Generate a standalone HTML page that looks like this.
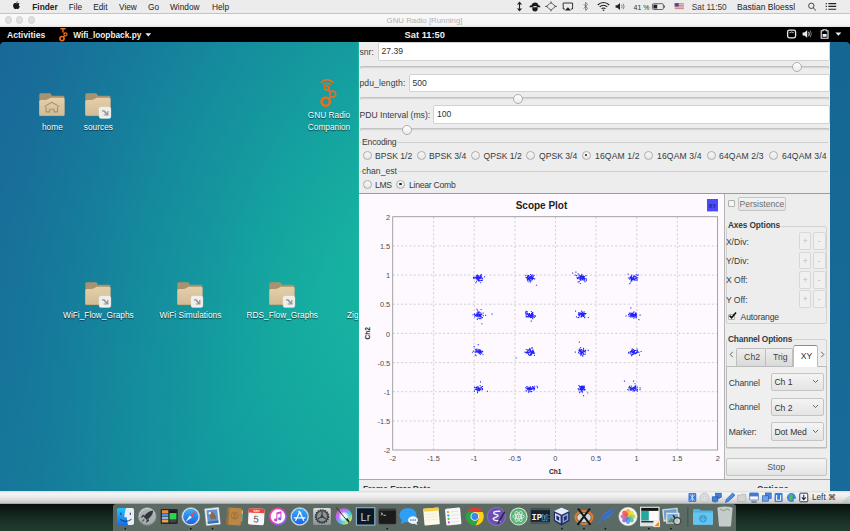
<!DOCTYPE html>
<html><head><meta charset="utf-8"><title>GNU Radio [Running]</title>
<style>
*{box-sizing:border-box;margin:0;padding:0}
html,body{width:850px;height:531px;overflow:hidden;background:#1a3a34;font-family:"Liberation Sans",sans-serif;font-size:8.5px;color:#2e3436}
.a{position:absolute}
.t{position:absolute;white-space:nowrap;line-height:1}
#macbar{left:0;top:0;width:850px;height:13px;background:#ececec}
#macbar .t{font-size:8.3px;top:2.5px;color:#222}
#title{left:0;top:13px;width:850px;height:14px;background:linear-gradient(#f9f9f9 0,#f5f5f5 80%,#e4e4e4 100%);border-top:1px solid #c4c4c4}
#gbar{left:0;top:27px;width:850px;height:15px;background:#000}
#gbar .t{color:#eee;font-weight:bold;font-size:8.4px;top:4.1px}
#desk{left:0;top:42px;width:850px;height:449px;overflow:hidden;
 background:linear-gradient(125deg,rgba(28,92,150,.4) 0,rgba(28,92,150,0) 42%),linear-gradient(35deg,rgba(18,150,156,.25) 0,rgba(18,150,156,0) 40%),radial-gradient(ellipse 480px 740px at 405px 255px,#18b8a2 0,#14a8a0 30%,#13939f 55%,#16789b 80%,#196998 100%)}
#rstrip{left:830px;top:42px;width:20px;height:449.2px;background:linear-gradient(#156693,#186b98)}
.dl{position:absolute;color:#fff;font-size:8.3px;text-align:center;line-height:11px;text-shadow:0 1px 1px rgba(0,0,0,.7);white-space:nowrap}
#app{left:358px;top:42px;width:472px;height:449px;background:#ededed;overflow:hidden}
.inp{position:absolute;background:#fff;border:1px solid #d2d2d2;border-radius:2px;height:18.6px;font-size:8.6px;line-height:16px;padding-left:3px;color:#2e3436}
.trk{position:absolute;height:3px;background:#d6d6d6;border:1px solid #c2c2c2;border-radius:2px;border-bottom-color:#e8e8e8}
.knob{position:absolute;width:10px;height:10px;border-radius:50%;background:linear-gradient(#fff,#ececec);border:1px solid #aeaeae}
.rad{position:absolute;width:9px;height:9px;border-radius:50%;border:1px solid #adadad;background:linear-gradient(#f8f8f8,#e6e6e6);margin:-1px 0 0 -.5px}
.rad.on:after{content:"";position:absolute;left:2.3px;top:2.3px;width:2.4px;height:2.4px;border-radius:50%;background:#222}
.lbl{position:absolute;white-space:nowrap;line-height:1;font-size:8.6px;color:#353b3e}
.fr{position:absolute;height:1px;background:#cfcfcf}
.btn{position:absolute;border:1px solid #c4c4c4;border-radius:2px;background:linear-gradient(#f4f4f4,#e4e4e4);text-align:center;color:#6a6e70}
.btn.pm{font-size:8.5px;color:#bcbcbc;border-color:#d8d8d8;background:#f0f0f0}
#vbbar{left:0;top:491.2px;width:850px;height:12.4px;background:linear-gradient(#dcdcdc 0,#f4f4f4 18%,#ececec 45%,#cdcdcd 88%,#9a9a9a 100%)}
#macdesk{left:0;top:503.4px;width:850px;height:28px;background:linear-gradient(#070d0a 0,#101f18 30%,#1d3529 75%,#223c2f 100%)}
#dock{left:112.7px;top:504.2px;width:623.8px;height:27px;background:#5b6b63;border-radius:3px 3px 0 0}
</style></head><body>

<div class="a" id="macdesk"></div>
<div class="a" id="dock"></div>
<!--DOCK-->
<svg class="a" id="docksvg" style="left:0;top:504px" width="850" height="27" viewBox="0 504 850 27">

<linearGradient id="gsil" x1="0" y1="0" x2="0" y2="1"><stop offset="0" stop-color="#d9dcdc"/><stop offset="1" stop-color="#8d9392"/></linearGradient>
<linearGradient id="gblue" x1="0" y1="0" x2="0" y2="1"><stop offset="0" stop-color="#35b0f8"/><stop offset="1" stop-color="#1d62e8"/></linearGradient>
<linearGradient id="gfin" x1="0" y1="0" x2="0" y2="1"><stop offset="0" stop-color="#22c4fa"/><stop offset="1" stop-color="#1a6cee"/></linearGradient>
<linearGradient id="gitu" x1="0" y1="0" x2="1" y2="1"><stop offset="0" stop-color="#ff4f8b"/><stop offset=".5" stop-color="#d63fd0"/><stop offset="1" stop-color="#5a7cf5"/></linearGradient>
<linearGradient id="gcol" x1="0" y1="0" x2="1" y2="1"><stop offset="0" stop-color="#ff4fb0"/><stop offset=".35" stop-color="#b070ff"/><stop offset=".6" stop-color="#40d0e0"/><stop offset=".85" stop-color="#e8e840"/><stop offset="1" stop-color="#ff9a30"/></linearGradient>
<radialGradient id="gwhc"><stop offset="0" stop-color="#fff"/><stop offset=".45" stop-color="#fff" stop-opacity=".9"/><stop offset="1" stop-color="#fff" stop-opacity="0"/></radialGradient>

<g transform="translate(125.5 516.5)"><rect x="-8.5" y="-8.5" width="17" height="17" rx="2" fill="url(#gfin)"/><path d="M.6 -8.5H6.5Q8.5 -8.5 8.5 -6.5V6.5Q8.5 8.5 6.5 8.5H2.6C1.4 4 1.2 1.5 1.3 .8H-1.2C-1 -3 -.2 -6 .6 -8.5Z" fill="#e9eef5"/><path d="M-4.6 -3.8V-1.6M4.8 -3.8V-1.6" stroke="#1b2c4a" stroke-width="1"/><path d="M-5.6 2.8Q0 6.8 6 2.8" stroke="#1b2c4a" stroke-width=".9" fill="none"/></g>
<g transform="translate(147.2 516.5)"><circle r="9" fill="url(#gsil)" stroke="#7d8483" stroke-width=".7"/><circle r="7.4" fill="#a9b0b1"/><path d="M6 -6C2.4 -5.8 -1.4 -3.2 -3.4 .4L-.4 3.4C3.2 1.4 5.8 -2.4 6 -6ZM-4 .6L-6.6 1.4L-4.4 -1.8L-2.6 -1.6ZM-.6 4L-1.4 6.6L1.8 4.4L1.6 2.6ZM-3.4 2.6L-6 6L-2.6 3.6Z" fill="#30363a"/></g>
<g transform="translate(169.2 516.5)"><rect x="-8.5" y="-7.5" width="17" height="15" rx="1" fill="#23262b"/><rect x="-7.3" y="-6.3" width="6.4" height="2.8" fill="#f08a2c"/><rect x="-7.3" y="-3.2" width="6.4" height="3" fill="#4e8fe0"/><rect x="-7.3" y=".2" width="6.4" height="2.6" fill="#8fb4e8"/><rect x="-7.3" y="3.2" width="6.4" height="2.8" fill="#f0a040"/><rect x=".4" y="-5.6" width="6.8" height="2" fill="#1a1a1a"/><rect x=".4" y="-3.4" width="6.8" height="6.4" fill="#2fd64a"/><rect x=".4" y="3.4" width="6.8" height="2.4" fill="#444"/></g>
<g transform="translate(190.8 516.5)"><circle r="9" fill="#e4e6e8" stroke="#a9adb0" stroke-width=".6"/><circle r="7.7" fill="url(#gblue)"/><path d="M5.2 -5.2L1 1L-1 -1Z" fill="#f2453d"/><path d="M-5.2 5.2L-1 -1L1 1Z" fill="#f4f4f4"/></g>
<g transform="translate(212.5 516.5)"><g transform="rotate(-6)"><rect x="-7" y="-8.4" width="14" height="16.8" fill="#f3f3f0" stroke="#cfd2d6" stroke-width=".5"/><rect x="-5.4" y="-6.8" width="10.8" height="13.6" fill="#5e94d6"/><path d="M-3.4 -3.4C-1 -5 1.6 -4.4 2 -2.4C3.6 -1 4 1.8 2.4 3.6L.8 1.8L-1.6 3.2C-1.8 1 -3 -1 -3.4 -3.4Z" fill="#8a6a48"/><circle cx="-2.4" cy="-3.6" r="1.3" fill="#f1efe9"/><rect x="-5.4" y="4.6" width="10.8" height="2.2" fill="#3f68a8"/></g></g>
<g transform="translate(234.3 516.5)"><g transform="rotate(4)"><rect x="-7.4" y="-8.6" width="14.4" height="17.2" rx="1.2" fill="#b98748"/><rect x="-7.4" y="-8.6" width="2" height="17.2" fill="#9c6e36"/><rect x="7" y="-6.6" width="1.3" height="3.6" fill="#e8c23c"/><rect x="7" y="-2.8" width="1.3" height="3.6" fill="#5ab0e8"/><rect x="7" y="1" width="1.3" height="3.6" fill="#58c070"/><circle cx=".4" cy="-1" r="3.5" fill="none" stroke="#9c6e36" stroke-width=".8"/><circle cx=".4" cy="-2" r="1.2" fill="#9c6e36"/><path d="M-1.8 1.4Q.4 -1 2.6 1.4" fill="#9c6e36"/></g></g>
<g transform="translate(256.3 516.5)"><g transform="rotate(3)"><rect x="-8" y="-8" width="16" height="16.4" rx="1.8" fill="#f7f7f7"/><path d="M-8 -3.6V-6.2Q-8 -8 -6.2 -8H6.2Q8 -8 8 -6.2V-3.6Z" fill="#f0453c"/><text x="0" y="-4.4" font-family="Liberation Sans,sans-serif" font-size="3.2" fill="#fff" text-anchor="middle" font-weight="bold">SEP</text><text x="0" y="5.8" font-family="Liberation Sans,sans-serif" font-size="9.6" fill="#4a4a4a" text-anchor="middle">5</text></g></g>
<g transform="translate(278 516.5)"><circle r="9" fill="url(#gitu)"/><circle r="7.2" fill="#fbfbfd"/><path d="M-1.6 -4L3.4 -5.2V2.2A1.7 1.5 0 1 1 2.4 .9V-3L-.6 -2.3V3.4A1.7 1.5 0 1 1 -1.6 2.1Z" fill="url(#gitu)"/></g>
<g transform="translate(299.7 516.5)"><circle r="9" fill="#dfe7f0" stroke="#b9c4d0" stroke-width=".5"/><circle r="7.9" fill="url(#gblue)"/><path d="M-4 4L0 -4.6L4 4M-5.4 1.4H5.4M-1 -4.8L1.2 -3.4" stroke="#fff" stroke-width="1.2" fill="none" stroke-linecap="round"/></g>
<g transform="translate(322 516.5)"><rect x="-8.8" y="-8.5" width="17.6" height="17" rx="1.5" fill="url(#gsil)"/><circle r="6.6" fill="#4a4f52"/><circle r="5" fill="#8e9496"/><circle r="1.5" fill="#3c4043"/><path d="M0 0V-5M0 0L4.3 2.5M0 0L-4.3 2.5" stroke="#3c4043" stroke-width="1.3"/><circle r="6.6" fill="none" stroke="#33373a" stroke-width="1.4" stroke-dasharray="1.4 1"/></g>
<g transform="translate(343.9 516.5)"><circle r="8.3" fill="url(#gcol)"/><circle r="5.6" fill="url(#gwhc)"/><path d="M-7.5 -9L3 4" stroke="#222" stroke-width=".9"/><path d="M2 2.6L4.8 6.4L6 5.6L3.4 1.6Z" fill="#1a1a2a"/></g>
<g transform="translate(365.6 516.5)"><rect x="-9.2" y="-8.8" width="18.4" height="17.4" fill="#0c1826" stroke="#8cb4d4" stroke-width="1.1"/><text x="-.2" y="4.6" font-family="Liberation Sans,sans-serif" font-size="11" fill="#b9d8f0" text-anchor="middle">Lr</text></g>
<g transform="translate(387.4 516.5)"><rect x="-8.6" y="-7.6" width="17.2" height="15.2" rx="1.2" fill="#1b1b1b" stroke="#3c3c3c" stroke-width=".6"/><rect x="-8.6" y="-7.6" width="17.2" height="2" fill="#3a3a3a"/><path d="M-6.6 -3.8L-4.6 -2.6L-6.6 -1.4M-4 -1.2H-1.6" stroke="#e8e8e8" stroke-width=".8" fill="none"/></g>
<g transform="translate(408.6 516.5)"><ellipse cx="-.6" cy="-1.4" rx="8.6" ry="7.2" fill="#2d9ff7"/><path d="M-6.6 3L-8 7.4L-2.6 5.4Z" fill="#2d9ff7"/><ellipse cx="4.4" cy="3.6" rx="5" ry="3.8" fill="#f1f4f8"/><path d="M7.6 6L9 8.6L5.4 7.2Z" fill="#f1f4f8"/><circle cx="2.2" cy="3.6" r=".8" fill="#3a7fd0"/><circle cx="4.4" cy="3.6" r=".8" fill="#3a7fd0"/><circle cx="6.6" cy="3.6" r=".8" fill="#3a7fd0"/></g>
<g transform="translate(431.4 516.5)"><g transform="rotate(-5)"><rect x="-7.6" y="-8.4" width="15.4" height="16.8" rx=".8" fill="#fbf8e8"/><rect x="-7.6" y="-8.4" width="15.4" height="3" fill="#f6cf45"/><path d="M-6 -2.4H6M-6 .4H6M-6 3.2H6" stroke="#e6e1cd" stroke-width=".5"/></g></g>
<g transform="translate(453.2 516.5)"><g transform="rotate(-5)"><rect x="-7.6" y="-8.4" width="15.2" height="16.8" rx="1.4" fill="#f8f8f6"/><circle cx="-4.8" cy="-4.8" r="1.1" fill="#f39c33"/><circle cx="-4.8" cy="-1.4" r="1.1" fill="#3b8cf2"/><circle cx="-4.8" cy="2" r="1.1" fill="#3fc93f"/><circle cx="-4.8" cy="5.4" r="1.1" fill="#d63fe0"/><path d="M-2.4 -4.8H5.6M-2.4 -1.4H5.6M-2.4 2H5.6M-2.4 5.4H5.6" stroke="#d9d9d5" stroke-width=".6"/></g></g>
<g transform="translate(474.8 516.5)"><circle r="9" fill="#e33b2e"/><path d="M-7.8 -4.5A9 9 0 0 0 .8 8.96L4 2.4L0 0Z" fill="#2ba24c"/><path d="M.8 8.96A9 9 0 0 0 7.8 -4.5H0L4 2.4Z" fill="#fbd116"/><path d="M-7.8 -4.5L-3.6 2L0 0V-4.5Z" fill="#2ba24c"/><circle r="4.3" fill="#f4f4f4"/><circle r="3.4" fill="#3f86e8"/></g>
<g transform="translate(496.4 516.5)"><circle r="9" fill="#6b4fb3"/><circle r="9" fill="none" stroke="#8f7ad0" stroke-width=".8"/><path d="M3.4 -5.2C-1 -5.6 -3.6 -4.4 -2.4 -3C-1 -1.6 2.4 -2 1.4 -.4C.4 1 -4 1 -3 2.8C-2 4.4 2 4 3.6 4.8" fill="none" stroke="#f3effa" stroke-width="1.4" stroke-linecap="round"/><path d="M7.8 -5.2L.6 6.8L2 7.4L8.8 -4Z" fill="#2a2540"/></g>
<g transform="translate(518.6 516.5)"><circle r="9" fill="#d8eadf"/><circle r="8" fill="#5db47a"/><g fill="none" stroke="#f0f8f2" stroke-width=".8"><ellipse rx="5.6" ry="2.2"/><ellipse rx="5.6" ry="2.2" transform="rotate(60)"/><ellipse rx="5.6" ry="2.2" transform="rotate(120)"/></g><circle r="1" fill="#f0f8f2"/></g>
<g transform="translate(540.4 516.5)"><rect x="-9.6" y="-8" width="19.2" height="14.8" fill="#18222c"/><rect x="-9.6" y="-8" width="19.2" height="1.6" fill="#4a545c"/><rect x="-9.6" y="5.2" width="19.2" height="1.6" fill="#4a545c"/><text x="-9" y="3" font-family="Liberation Mono,monospace" font-size="9.5" font-weight="bold" fill="#f2f2f2" textLength="10.5" lengthAdjust="spacingAndGlyphs">IP</text><text x="1.4" y="2.6" font-family="Liberation Mono,monospace" font-size="8" font-weight="bold" fill="#a4cbe8" textLength="8" lengthAdjust="spacingAndGlyphs">[y]:</text></g>
<g transform="translate(561.6 516.5)"><path d="M0 -9L7.8 -5.4V4.4L0 9L-7.8 4.4V-5.4Z" fill="#1d2f6a"/><path d="M0 -9L7.8 -5.4L0 -1.8L-7.8 -5.4Z" fill="#e6ebf4"/><path d="M-6.6 -3.4L-1 -0.8V6.8L-6.6 3.6Z" fill="#cdd6ea"/><path d="M6.6 -3.4L1 -0.8V6.8L6.6 3.6Z" fill="#8ea0cc"/><path d="M-5.2 -1L-2.4 .4V4.4L-5.2 2.8Z" fill="#1d2f6a"/><path d="M5.2 -1L2.4 .4V4.4L5.2 2.8Z" fill="#1d2f6a"/></g>
<g transform="translate(584 516.5)"><ellipse rx="8.6" ry="6.4" cy="1" fill="none" stroke="#e8762c" stroke-width="2"/><ellipse rx="6.8" ry="4.6" cy="1" fill="#e9e9e9" opacity=".85"/><path d="M-6 -8L6.4 8.4M-6.4 8.4L6 -8" stroke="#151515" stroke-width="2"/></g>
<g transform="translate(605.8 516.5)"><path d="M9.2 -7.6C4 -8 -2.6 -3.6 -5.2 2.4L-8.8 7.8L-7.8 8.4L-4.2 3.8C2.4 3 8 -2 9.2 -7.6Z" fill="#3f73c4"/><path d="M8 -6.6C3.6 -4 -1.6 .4 -5 4" stroke="#2a56a0" stroke-width=".6" fill="none"/></g>
<g transform="translate(628 516.5)"><circle r="9.2" fill="#f6f6f6" stroke="#cfd2d2" stroke-width=".5"/><ellipse rx="2.3" ry="3.5" cy="-3.9" fill="#f7a928" opacity=".88" transform="rotate(0)"/><ellipse rx="2.3" ry="3.5" cy="-3.9" fill="#f4d92a" opacity=".88" transform="rotate(45)"/><ellipse rx="2.3" ry="3.5" cy="-3.9" fill="#b2d235" opacity=".88" transform="rotate(90)"/><ellipse rx="2.3" ry="3.5" cy="-3.9" fill="#4cc2a4" opacity=".88" transform="rotate(135)"/><ellipse rx="2.3" ry="3.5" cy="-3.9" fill="#4a9fe0" opacity=".88" transform="rotate(180)"/><ellipse rx="2.3" ry="3.5" cy="-3.9" fill="#8070d0" opacity=".88" transform="rotate(225)"/><ellipse rx="2.3" ry="3.5" cy="-3.9" fill="#d160b8" opacity=".88" transform="rotate(270)"/><ellipse rx="2.3" ry="3.5" cy="-3.9" fill="#f0544a" opacity=".88" transform="rotate(315)"/></g>
<g transform="translate(649.8 516.5)"><rect x="-9.8" y="-9.8" width="19.6" height="19.6" fill="#dfe2e2"/><rect x="-8.6" y="-8.6" width="17.2" height="14.6" fill="#fafafa"/><rect x="-8.6" y="-8.6" width="17.2" height="3" fill="#161616"/><rect x="-8.6" y="-5.6" width="7.6" height="9.6" fill="#25a79c"/><rect x="-8.6" y="4.4" width="17.2" height="1.6" fill="#333"/><rect x="3.6" y="4.2" width="6.4" height="6.4" fill="#f4f1ea"/><path d="M4.4 9.8L9.2 5V9.8Z" fill="#f08a24"/></g>
<g transform="translate(672.2 516.5)"><g transform="rotate(-6)"><rect x="-9" y="-8" width="15" height="12" fill="#f2f2ee" stroke="#c9c9c4" stroke-width=".4"/><rect x="-8" y="-7" width="13" height="10" fill="#6f9fd0"/><path d="M-8 3L-3.4 -2L.4 1.4L2.6 -.6L5 3Z" fill="#c9b48a"/></g><rect x="-6" y="-3.6" width="13" height="10.5" fill="#f2f2ee" stroke="#c9c9c4" stroke-width=".4"/><rect x="-5" y="-2.6" width="11" height="8.5" fill="#7fb0dc"/><path d="M-5 5.9L-1 1.4L2.4 4.4L6 2V5.9Z" fill="#5d8f5a"/><circle cx="5" cy="4.6" r="3.6" fill="#cfd6da" fill-opacity=".8" stroke="#4a4a4a" stroke-width="1.3"/><path d="M1 -1.4L3 2" stroke="#333" stroke-width="1.6"/></g>
<path d="M687.8 507V527" stroke="#3f4a47" stroke-width=".8"/>
<g transform="translate(703 516.5)"><path d="M-10 -6.4Q-10 -7.6 -8.8 -7.6H-3.6L-2 -6H8.8Q10 -6 10 -4.8V7Q10 8.2 8.8 8.2H-8.8Q-10 8.2 -10 7Z" fill="#4fb2e6"/><path d="M-10 -4H10V7Q10 8.2 8.8 8.2H-8.8Q-10 8.2 -10 7Z" fill="#66c4f0"/><circle cy="2.2" r="3.8" fill="#3f9fd6"/><path d="M0 -.2V4M-1.8 2.4L0 4.4L1.8 2.4" stroke="#66c4f0" stroke-width="1" fill="none"/></g>
<g transform="translate(725 516.5)"><path d="M-7.6 -8.4H7.6L6 9.2Q5.9 10 5 10H-5Q-5.9 10 -6 9.2Z" fill="#dde3e3" fill-opacity=".82"/><ellipse cy="-8.4" rx="7.6" ry="1.5" fill="#c4cccc"/><path d="M-4.4 -5V8M-1.5 -5V8.4M1.5 -5V8.4M4.4 -5V8" stroke="#c2c9c9" stroke-width=".7"/><path d="M-5 -7.4L-1 -5.6L2 -7.6L5 -6" stroke="#8a9a7a" stroke-width="1" fill="none"/></g>
<circle cx="125.3" cy="528.6" r=".85" fill="#0c0c0c"/>
<circle cx="190.8" cy="528.6" r=".85" fill="#0c0c0c"/>
<circle cx="212.5" cy="528.6" r=".85" fill="#0c0c0c"/>
<circle cx="387.2" cy="528.6" r=".85" fill="#0c0c0c"/>
<circle cx="562" cy="528.6" r=".85" fill="#0c0c0c"/>
<circle cx="584" cy="528.6" r=".85" fill="#0c0c0c"/>
<circle cx="605.4" cy="528.6" r=".85" fill="#0c0c0c"/>
<circle cx="648.9" cy="528.6" r=".85" fill="#0c0c0c"/>
<circle cx="670.9" cy="528.6" r=".85" fill="#0c0c0c"/>
</svg>
<!--/DOCK-->

<div class="a" id="macbar">
 <svg class="a" style="left:12.8px;top:1.2px" width="7" height="8.8" viewBox="0 0 8 10"><path d="M5.4 .2C5.4 1.2 4.7 2 3.8 2.1C3.7 1.2 4.5 .3 5.4 .2ZM4 2.6C4.5 2.6 5 2.2 5.7 2.2C6.5 2.2 7.1 2.6 7.5 3.2C6.2 4 6.4 5.9 7.8 6.4C7.5 7.3 6.6 9.2 5.6 9.2C5 9.2 4.7 8.8 4 8.8C3.3 8.8 3 9.2 2.4 9.2C1.3 9.2 .1 7 .1 5.2C.1 3.400 1.200 2.400 2.300 2.400C3 2.400 3.500 2.600 4 2.600Z" fill="#1a1a1a"/></svg>
 <div class="t" style="left:32.3px;font-weight:bold">Finder</div>
 <div class="t" style="left:68.8px">File</div>
 <div class="t" style="left:93.2px">Edit</div>
 <div class="t" style="left:119px">View</div>
 <div class="t" style="left:148px">Go</div>
 <div class="t" style="left:170px">Window</div>
 <div class="t" style="left:212px">Help</div>
 <svg class="a" style="left:510px;top:0" width="340" height="13" viewBox="510 0 340 13" fill="none" stroke="#222" stroke-width="1">
  <path d="M519.5 3V10M517.6 4.600L519.5 2.400L521.4 4.600M517.6 8.400L519.5 10.600L521.400 8.400" stroke-width="1.1"/>
  <path d="M529.500 7.200C529.500 5.600 531 5.200 531.600 5.400C531.800 3.600 533.600 2.600 535.200 2.600C537 2.600 538.200 3.700 538.400 5.200C539.600 5.200 540.500 6 540.500 7.200ZM532.300 8.800A2.700 2.700 0 1 0 537.700 8.800A2.700 2.700 0 1 0 532.300 8.800Z" fill="#1a1a1a" stroke="none" fill-rule="evenodd"/>
  <path d="M533.700 9.200L534.700 9.900L536.500 7.800" stroke="#1a1a1a" stroke-width=".9"/>
  <path d="M546.400 6.400L551 2.600L555.600 6.400L551 10.200ZM551 1.400V3.600M551 9.200V11.400M545 6.400H547.500M554.500 6.400H557" stroke-width=".8" stroke="#444"/>
  <path d="M565 9H563.200V3H572.600V9H570.800" stroke-width=".9"/><path d="M564.800 10.600L567.900 7.200L571 10.600Z" fill="#222" stroke="none"/>
  <path d="M583.700 4.200L587.600 8.400L585.700 10.400V2.400L587.600 4.400L583.700 8.600" stroke-width=".7" stroke="#555"/>
  <path d="M597.800 5A7.800 7.800 0 0 1 609.200 5M599.700 7A5 5 0 0 1 607.300 7M601.600 8.900A2.500 2.500 0 0 1 605.400 8.900" stroke-width="1.150"/><circle cx="603.500" cy="10.300" r=".8" fill="#222" stroke="none"/>
  <path d="M615.600 5.200H617.400L620 3V10L617.400 7.800H615.600Z" fill="#222" stroke="none"/><path d="M621.600 4.800Q622.800 6.500 621.600 8.200M623.200 3.800Q625 6.500 623.200 9.200" stroke-width=".7" stroke="#555"/>
  <rect x="652.400" y="3.700" width="11" height="5.800" rx="1.200" stroke="#444" stroke-width=".8"/><rect x="653.400" y="4.700" width="3.800" height="3.800" fill="#222" stroke="none"/><path d="M664.400 5.600V7.600" stroke="#444" stroke-width="1"/>
  <rect x="674.700" y="3.200" width="9.200" height="6" fill="#e8d5d8" stroke="none"/><path d="M674.700 3.700H683.900M674.700 5.300H683.900M674.700 6.900H683.900M674.700 8.600H683.900" stroke="#c9616b" stroke-width=".7"/><rect x="674.700" y="3.200" width="4" height="3.300" fill="#4a4a8c" stroke="none"/>
  <circle cx="811.300" cy="5.800" r="2.700" stroke="#333" stroke-width=".9"/><path d="M813.200 7.800L815.800 10.400" stroke="#333" stroke-width="1"/>
  <path d="M828.400 3.600H836.200M828.400 6.400H836.200M828.400 9.200H836.200" stroke="#222" stroke-width="1.100"/><path d="M825.700 3.600H826.900M825.700 6.400H826.900M825.700 9.200H826.900" stroke="#222" stroke-width="1.100"/>
 </svg>
 <div class="t" style="left:633.6px;font-size:7px;top:3.9px;color:#333">41 %</div>
 <div class="t" style="left:691.8px;color:#3a3a3a">Sat 11:50</div>
 <div class="t" style="left:737.1px;font-size:8.5px;top:2.9px">Bastian Bloessl</div>
</div>
<div class="a" id="title">
 <div class="t" style="left:386.6px;top:2.8px;font-size:7.85px;color:#b2b2b2">GNU Radio [Running]</div>
 <div class="a" style="left:4.6px;top:2.4px;width:7.2px;height:7.2px;border-radius:50%;background:#dedede;border:.6px solid #d2d2d2"></div>
 <div class="a" style="left:16.3px;top:2.4px;width:7.2px;height:7.2px;border-radius:50%;background:#dedede;border:.6px solid #d2d2d2"></div>
 <div class="a" style="left:28.0px;top:2.4px;width:7.2px;height:7.2px;border-radius:50%;background:#dedede;border:.6px solid #d2d2d2"></div>
</div>
<div class="a" id="gbar">
 <div class="t" style="left:7px;font-size:8.600px">Activities</div>
 <svg class="a" style="left:58px;top:0" width="12" height="15" viewBox="58 27 12 15" fill="none" stroke="#f26b1d"><path d="M60.400 28.700H65.600" stroke-width="1.500"/><path d="M63 29V32.400" stroke-width="1.400"/><circle cx="65.500" cy="34.400" r="1.500" stroke-width="1.200"/><circle cx="62" cy="38.600" r="2.100" stroke-width="1.600"/><path d="M63.600 32.800L64.500 33.400M64.600 35.800L63.400 36.900" stroke-width="1.200"/></svg>
 <div class="t" style="left:73.200px;font-size:8.300px">Wifi_loopback.py</div>
 <svg class="a" style="left:144.500px;top:5.500px" width="7" height="4" viewBox="0 0 7 4"><path d="M.4 .3H6.200L3.300 3.600Z" fill="#eee"/></svg>
 <div class="t" style="left:404.6px;font-size:9.3px;top:3.9px">Sat 11:50</div>
 <svg class="a" style="left:780px;top:0" width="70" height="15" viewBox="780 27 70 15">
  <rect x="787.600" y="30.200" width="8" height="7.600" rx="1.800" fill="none" stroke="#eee" stroke-width="1.300"/><path d="M789.400 32.800Q791.600 31.200 793.800 32.800" stroke="#eee" stroke-width=".8" fill="none"/>
  <path d="M802.600 32.600H804.400L807.200 30.200V37.800L804.400 35.400H802.600Z" fill="#eee"/><path d="M808.600 31.800Q810 34 808.600 36.200" stroke="#eee" stroke-width="1" fill="none"/><path d="M810.200 30.600Q812.400 34 810.200 37.400" stroke="#888" stroke-width=".9" fill="none"/>
  <path d="M823 29.800H826.200V30.800H828V38.200H821.200V30.800H823Z" fill="none" stroke="#eee" stroke-width="1.100"/><rect x="822.600" y="34" width="4" height="2.800" fill="#eee"/>
  <path d="M835.400 32.400H841.400L838.400 35.800Z" fill="#eee"/>
 </svg>
</div>

<div class="a" id="desk">
 <svg width="0" height="0" style="position:absolute">
  <linearGradient id="fg" x1="0" y1="0" x2="0" y2="1"><stop offset="0" stop-color="#e2cfab"/><stop offset="1" stop-color="#d3bc94"/></linearGradient>
  </svg>
 <svg class="a" style="left:39.1px;top:50.5px" width="27" height="26" viewBox="0 0 27 26"><path d="M.3 1.8Q.3 .3 1.8 .3H10.6Q11.8 .3 12.3 1.4L12.9 2.7H24Q25.5 2.7 25.5 4.2V21.5Q25.5 23 24 23H1.8Q.3 23 .3 21.5Z" fill="#a9926d"/><path d="M.3 8.4Q.3 6.9 1.8 6.9H6.5C9.5 6.9 10 4.7 13 4.7H24Q25.5 4.7 25.5 6.2V21.5Q25.5 23 24 23H1.8Q.3 23 .3 21.5Z" fill="url(#fg)"/><path d="M.8 22.6H25" stroke="#b8a37c" stroke-width=".7"/><path d="M5.3 13.6L12.8 9.2L20.3 13.6M7.1 14V18.9H10.6V16.3H15V18.9H18.5V14" fill="none" stroke="#a8916b" stroke-width="1.1" stroke-linejoin="round"/></svg>
 <svg class="a" style="left:85.0px;top:50.5px" width="27" height="26" viewBox="0 0 27 26"><path d="M.3 1.8Q.3 .3 1.8 .3H10.6Q11.8 .3 12.3 1.4L12.9 2.7H24Q25.5 2.7 25.5 4.2V21.5Q25.5 23 24 23H1.8Q.3 23 .3 21.5Z" fill="#a9926d"/><path d="M.3 8.4Q.3 6.9 1.8 6.9H6.5C9.5 6.9 10 4.7 13 4.7H24Q25.5 4.7 25.5 6.2V21.5Q25.5 23 24 23H1.8Q.3 23 .3 21.5Z" fill="url(#fg)"/><path d="M.8 22.6H25" stroke="#b8a37c" stroke-width=".7"/><rect x="14.3" y="14.3" width="11.4" height="11" rx="1.6" fill="#eeeeec" stroke="#fafafa" stroke-width=".6"/><path d="M17 17.2H19.4L22.2 20.2V18H23.4V22.6H18.8V21.4H21L18.4 18.6H17Z" fill="#959595"/></svg>
 <svg class="a" style="left:85.2px;top:240.0px" width="27" height="26" viewBox="0 0 27 26"><path d="M.3 1.8Q.3 .3 1.8 .3H10.6Q11.8 .3 12.3 1.4L12.9 2.7H24Q25.5 2.7 25.5 4.2V21.5Q25.5 23 24 23H1.8Q.3 23 .3 21.5Z" fill="#a9926d"/><path d="M.3 8.4Q.3 6.9 1.8 6.9H6.5C9.5 6.9 10 4.7 13 4.7H24Q25.5 4.7 25.5 6.2V21.5Q25.5 23 24 23H1.8Q.3 23 .3 21.5Z" fill="url(#fg)"/><path d="M.8 22.6H25" stroke="#b8a37c" stroke-width=".7"/><rect x="14.3" y="14.3" width="11.4" height="11" rx="1.6" fill="#eeeeec" stroke="#fafafa" stroke-width=".6"/><path d="M17 17.2H19.4L22.2 20.2V18H23.4V22.6H18.8V21.4H21L18.4 18.6H17Z" fill="#959595"/></svg>
 <svg class="a" style="left:177.3px;top:240.0px" width="27" height="26" viewBox="0 0 27 26"><path d="M.3 1.8Q.3 .3 1.8 .3H10.6Q11.8 .3 12.3 1.4L12.9 2.7H24Q25.5 2.7 25.5 4.2V21.5Q25.5 23 24 23H1.8Q.3 23 .3 21.5Z" fill="#a9926d"/><path d="M.3 8.4Q.3 6.9 1.8 6.9H6.5C9.5 6.9 10 4.7 13 4.7H24Q25.5 4.7 25.5 6.2V21.5Q25.5 23 24 23H1.8Q.3 23 .3 21.5Z" fill="url(#fg)"/><path d="M.8 22.6H25" stroke="#b8a37c" stroke-width=".7"/><rect x="14.3" y="14.3" width="11.4" height="11" rx="1.6" fill="#eeeeec" stroke="#fafafa" stroke-width=".6"/><path d="M17 17.2H19.4L22.2 20.2V18H23.4V22.6H18.8V21.4H21L18.4 18.6H17Z" fill="#959595"/></svg>
 <svg class="a" style="left:269.3px;top:240.0px" width="27" height="26" viewBox="0 0 27 26"><path d="M.3 1.8Q.3 .3 1.8 .3H10.6Q11.8 .3 12.3 1.4L12.9 2.7H24Q25.5 2.7 25.5 4.2V21.5Q25.5 23 24 23H1.8Q.3 23 .3 21.5Z" fill="#a9926d"/><path d="M.3 8.4Q.3 6.9 1.8 6.9H6.5C9.5 6.9 10 4.7 13 4.7H24Q25.5 4.7 25.5 6.2V21.5Q25.5 23 24 23H1.8Q.3 23 .3 21.5Z" fill="url(#fg)"/><path d="M.8 22.6H25" stroke="#b8a37c" stroke-width=".7"/><rect x="14.3" y="14.3" width="11.4" height="11" rx="1.6" fill="#eeeeec" stroke="#fafafa" stroke-width=".6"/><path d="M17 17.2H19.4L22.2 20.2V18H23.4V22.6H18.8V21.4H21L18.4 18.6H17Z" fill="#959595"/></svg>
 <svg class="a" style="left:318px;top:35px" width="20" height="32" viewBox="318 77 20 32"><g fill="none" stroke="#f26b1d" stroke-linecap="round">
  <path d="M321.3 82.6A7.4 7.4 0 0 1 333 82.6" stroke-width="1.5"/><path d="M323.6 84.6A4.6 4.6 0 0 1 330.4 84.6" stroke-width="1.4"/>
  <circle cx="326.6" cy="87.9" r="2.1" stroke-width="1.4"/>
  <circle cx="332.7" cy="94.1" r="3" stroke-width="1.6"/>
  <circle cx="325.7" cy="101.6" r="4.2" stroke-width="2.5"/>
  <path d="M328.2 89.6L330.4 91.8M330.6 96.8L328.6 98.6" stroke-width="1.8"/></g></svg>
 <div class="dl" style="left:7.4px;top:79.6px;width:90px">home</div>
 <div class="dl" style="left:53.4px;top:79.6px;width:90px">sources</div>
 <div class="dl" style="left:284.0px;top:67.8px;width:90px">GNU Radio</div>
 <div class="dl" style="left:284.0px;top:80.4px;width:90px">Companion</div>
 <div class="dl" style="left:53.4px;top:268.2px;width:90px">WiFi_Flow_Graphs</div>
 <div class="dl" style="left:145.4px;top:268.2px;width:90px">WiFi Simulations</div>
 <div class="dl" style="left:237.3px;top:268.2px;width:90px">RDS_Flow_Graphs</div>
 <div class="dl" style="left:347px;top:268.2px">Zig</div>
</div>

<div class="a" id="rstrip"></div>
<div class="a" style="left:0;top:41.8px;width:3px;height:3px;background:radial-gradient(circle at 100% 100%,rgba(0,0,0,0) 2.4px,#000 3px);z-index:6"></div>
<div class="a" style="left:847px;top:41.8px;width:3px;height:3px;background:radial-gradient(circle at 0 100%,rgba(0,0,0,0) 2.4px,#000 3px);z-index:6"></div>
<div class="a" style="left:358px;top:42px;width:1.1px;height:449.2px;background:linear-gradient(90deg,#19b5a1 0 60%,#3a5a58 60%);z-index:5"></div>
<div class="a" id="app">
 <!-- coordinates inside #app are screen minus (358,42) -->
 <div class="lbl" style="left:1.5px;top:5.5px">snr:</div>
 <div class="inp" style="left:19.5px;top:0;width:452px">27.39</div>
 <div class="trk" style="left:2px;top:23.5px;width:469px"></div>
 <div class="knob" style="left:433.5px;top:20px"></div>

 <div class="lbl" style="left:1.5px;top:37px;letter-spacing:0.09px">pdu_length:</div>
 <div class="inp" style="left:50.5px;top:31.5px;width:421px">500</div>
 <div class="trk" style="left:2px;top:55px;width:469px"></div>
 <div class="knob" style="left:154.5px;top:51.5px"></div>

 <div class="lbl" style="left:1.5px;top:68.5px">PDU Interval (ms):</div>
 <div class="inp" style="left:75px;top:63px;width:396.5px">100</div>
 <div class="trk" style="left:2px;top:86px;width:469px"></div>
 <div class="knob" style="left:43.5px;top:82.5px"></div>

 <div class="fr" style="left:2px;top:100px;width:468px"></div>
 <div class="lbl" style="left:3px;top:96px;background:#ededed;padding:0 1px;letter-spacing:-0.17px">Encoding</div>
 <div class="rad" style="left:5px;top:109.5px"></div><div class="lbl" style="left:17px;top:109.5px">BPSK 1/2</div>
 <div class="rad" style="left:59px;top:109.5px"></div><div class="lbl" style="left:71px;top:109.5px">BPSK 3/4</div>
 <div class="rad" style="left:113px;top:109.5px"></div><div class="lbl" style="left:125.5px;top:109.5px">QPSK 1/2</div>
 <div class="rad" style="left:168.5px;top:109.5px"></div><div class="lbl" style="left:181px;top:109.5px">QPSK 3/4</div>
 <div class="rad on" style="left:224px;top:109.5px"></div><div class="lbl" style="left:237px;top:109.5px;letter-spacing:0.13px">16QAM 1/2</div>
 <div class="rad" style="left:286.5px;top:109.5px"></div><div class="lbl" style="left:299px;top:109.5px;letter-spacing:0.13px">16QAM 3/4</div>
 <div class="rad" style="left:349px;top:109.5px"></div><div class="lbl" style="left:361px;top:109.5px;letter-spacing:0.13px">64QAM 2/3</div>
 <div class="rad" style="left:411.5px;top:109.5px"></div><div class="lbl" style="left:424px;top:109.5px;letter-spacing:0.13px">64QAM 3/4</div>

 <div class="fr" style="left:2px;top:129px;width:468px"></div>
 <div class="lbl" style="left:3px;top:124.5px;background:#ededed;padding:0 1px">chan_est</div>
 <div class="rad" style="left:5px;top:138.5px"></div><div class="lbl" style="left:17px;top:138.5px;letter-spacing:-0.4px">LMS</div>
 <div class="rad on" style="left:38.5px;top:138.5px"></div><div class="lbl" style="left:51px;top:138.5px;letter-spacing:-0.25px">Linear Comb</div>

 <!--PLOT-->
<svg class="a" id="plot" style="left:1.4px;top:152.0px" width="365.0" height="285.3" viewBox="0 0 365.0 285.3">
<rect width="365.0" height="285.3" fill="#fdf9ff"/>
<path d="M74.6 22.7V256.1M33.7 226.9H358.6M115.2 22.7V256.1M33.7 197.7H358.6M155.9 22.7V256.1M33.7 168.6H358.6M196.5 22.7V256.1M33.7 139.4H358.6M237.1 22.7V256.1M33.7 110.2H358.6M277.8 22.7V256.1M33.7 81.1H358.6M318.4 22.7V256.1M33.7 51.9H358.6" stroke="#c6c4c8" stroke-width="0.8" stroke-dasharray="2 2.2" fill="none"/>
<rect x="33.7" y="22.7" width="324.9" height="233.3" fill="none" stroke="#9a9a9a" stroke-width="0.9"/>
<path d="M121.5 195.6h1M118.9 195.2h1M118.8 194.8h1M118.6 195.0h1M121.0 195.6h1M119.8 194.2h1M119.8 196.7h1M121.7 194.2h1M115.0 197.1h1M123.0 195.6h1M119.0 195.6h1M120.6 195.6h1M119.8 194.0h1M116.9 193.8h1M117.6 196.1h1M119.9 195.0h1M120.1 196.8h1M117.8 195.3h1M117.5 194.0h1M118.2 197.2h1M118.9 193.8h1M117.2 194.0h1M121.6 193.2h1M118.0 198.6h1M120.8 195.8h1M119.4 194.0h1M118.8 194.8h1M117.7 192.8h1M115.7 193.6h1M118.1 196.8h1M117.2 193.8h1M115.7 195.5h1M121.4 194.3h1M119.0 194.4h1M118.5 192.9h1M122.9 194.7h1M118.9 196.2h1M119.1 194.6h1M118.2 195.0h1M119.8 195.1h1M119.4 194.1h1M119.3 196.2h1M119.9 194.4h1M117.0 195.4h1M122.0 193.1h1M120.4 194.0h1M117.7 195.5h1M123.0 192.5h1M120.0 195.5h1M119.5 195.8h1M116.7 195.0h1M119.3 194.9h1M117.7 195.5h1M114.9 193.4h1M118.5 193.3h1M117.1 193.4h1M128.0 197.3h1M121.0 187.9h1M120.6 191.5h1M117.7 195.8h1M121.7 157.7h1M121.6 159.0h1M121.6 158.9h1M114.1 157.1h1M118.7 157.5h1M119.9 159.1h1M115.7 155.3h1M117.3 156.9h1M121.2 158.9h1M121.8 157.6h1M118.8 158.5h1M119.3 155.6h1M116.0 158.1h1M117.8 157.7h1M121.3 157.5h1M117.5 155.1h1M119.4 156.7h1M118.7 157.4h1M120.8 156.5h1M121.0 157.1h1M119.8 159.5h1M116.2 157.8h1M116.4 156.3h1M119.4 157.0h1M119.5 159.2h1M119.8 157.0h1M115.7 157.9h1M123.2 157.7h1M117.9 158.0h1M117.7 157.1h1M120.6 155.8h1M115.8 160.8h1M120.2 158.1h1M117.3 158.1h1M112.9 158.3h1M119.2 157.8h1M121.0 157.2h1M116.7 155.8h1M120.9 158.7h1M119.0 157.0h1M121.1 156.9h1M118.7 157.4h1M122.6 157.1h1M115.8 158.3h1M120.4 158.2h1M119.8 157.8h1M117.2 157.0h1M117.6 156.3h1M117.2 157.0h1M120.5 157.5h1M118.9 157.7h1M120.4 155.8h1M122.2 159.2h1M123.5 160.8h1M120.8 160.4h1M120.8 158.0h1M115.6 157.8h1M116.5 161.6h1M120.2 156.8h1M118.7 150.7h1M114.6 152.6h1M120.1 121.7h1M115.0 120.7h1M119.8 118.5h1M119.5 120.0h1M121.2 122.9h1M119.9 121.4h1M118.2 119.0h1M115.7 121.3h1M119.8 120.6h1M119.5 121.5h1M121.2 122.1h1M123.7 121.6h1M121.0 121.6h1M122.2 120.6h1M119.8 122.3h1M115.5 120.8h1M117.7 120.9h1M115.0 120.4h1M123.6 119.2h1M120.4 120.2h1M117.2 121.6h1M117.9 121.9h1M118.3 119.3h1M119.7 122.5h1M121.9 123.1h1M122.1 120.0h1M118.2 122.0h1M120.9 122.5h1M119.3 120.2h1M120.3 120.3h1M118.6 119.9h1M117.5 115.4h1M117.5 122.0h1M118.7 121.6h1M118.0 122.2h1M116.1 121.7h1M117.4 122.4h1M117.8 125.4h1M122.9 123.6h1M119.9 124.6h1M120.8 121.7h1M120.4 120.3h1M119.5 117.6h1M121.2 118.8h1M121.3 120.4h1M116.8 120.5h1M117.4 121.0h1M118.6 124.1h1M121.1 124.5h1M119.3 121.3h1M120.7 121.7h1M118.1 120.2h1M119.2 121.9h1M126.1 121.4h1M115.2 122.9h1M118.9 120.6h1M118.1 116.9h1M120.9 120.7h1M121.4 124.8h1M117.5 119.4h1M119.9 122.8h1M118.5 119.7h1M121.6 115.5h1M119.7 121.0h1M113.5 120.8h1M117.7 120.8h1M116.4 121.8h1M117.5 118.8h1M115.1 119.9h1M121.1 120.7h1M119.6 122.2h1M122.4 129.8h1M119.0 118.5h1M132.5 120.1h1M119.7 120.3h1M119.8 84.6h1M121.7 80.9h1M118.5 82.7h1M119.4 85.5h1M118.1 84.3h1M117.7 84.5h1M125.0 82.8h1M117.7 83.6h1M121.2 83.6h1M119.2 84.1h1M117.5 85.4h1M117.8 84.0h1M119.1 84.0h1M119.2 84.8h1M118.8 84.3h1M121.2 84.2h1M119.6 86.4h1M115.7 83.4h1M117.4 81.6h1M120.9 82.7h1M116.4 88.7h1M121.4 86.4h1M118.9 83.6h1M121.7 80.7h1M116.8 81.9h1M119.8 83.1h1M116.7 83.7h1M121.3 81.1h1M120.7 81.8h1M121.9 82.3h1M118.8 82.7h1M120.5 84.2h1M118.6 84.6h1M120.8 82.0h1M117.2 82.1h1M118.2 82.1h1M123.2 84.1h1M119.3 81.8h1M116.2 83.4h1M122.6 85.2h1M119.3 84.7h1M119.0 86.9h1M120.3 86.9h1M121.9 83.7h1M117.5 85.4h1M117.8 81.1h1M117.0 82.2h1M120.4 84.5h1M119.2 87.0h1M118.4 86.2h1M120.1 84.0h1M118.9 86.7h1M118.1 81.4h1M118.6 86.1h1M116.9 84.4h1M122.7 86.6h1M121.2 88.8h1M119.7 83.9h1M115.4 84.8h1M121.7 83.6h1M119.1 85.2h1M120.7 83.6h1M118.3 83.5h1M113.9 83.3h1M122.1 86.5h1M114.7 83.8h1M118.9 82.7h1M121.3 82.7h1M119.7 84.0h1M114.0 84.2h1M118.5 86.4h1M117.0 87.3h1M171.5 194.3h1M174.2 193.9h1M172.4 194.2h1M169.2 195.7h1M174.0 194.8h1M169.2 195.9h1M170.7 195.2h1M174.4 196.3h1M169.6 197.8h1M170.8 195.8h1M169.3 194.8h1M166.7 197.1h1M174.1 193.2h1M167.3 192.7h1M173.6 194.2h1M170.7 194.4h1M170.5 193.4h1M170.9 192.9h1M170.7 195.2h1M171.9 194.5h1M168.7 195.0h1M169.7 196.9h1M172.6 194.7h1M169.7 193.9h1M168.6 194.4h1M171.5 195.5h1M172.2 197.5h1M169.2 194.8h1M177.5 192.4h1M169.6 195.0h1M171.2 195.3h1M170.3 195.3h1M171.0 195.8h1M166.3 193.7h1M170.8 193.5h1M168.3 195.6h1M169.3 195.6h1M172.6 195.2h1M172.0 194.7h1M167.5 194.8h1M171.9 194.1h1M170.6 195.8h1M168.7 195.6h1M175.2 194.1h1M171.2 194.6h1M174.5 195.2h1M173.0 193.9h1M170.8 194.8h1M166.6 196.7h1M173.0 192.5h1M172.6 194.6h1M171.9 195.3h1M167.3 194.5h1M174.4 194.1h1M168.4 193.0h1M167.9 195.3h1M174.8 195.4h1M171.4 197.7h1M169.6 193.9h1M172.1 195.5h1M168.4 193.3h1M171.5 195.1h1M167.7 194.6h1M169.5 195.4h1M170.5 194.7h1M169.0 198.2h1M178.1 193.6h1M175.2 192.3h1M171.2 197.3h1M172.3 158.2h1M173.5 156.2h1M172.4 158.4h1M168.7 158.6h1M167.0 158.0h1M170.4 156.2h1M170.6 158.0h1M169.6 161.0h1M173.5 158.7h1M172.1 160.6h1M171.8 159.6h1M170.3 161.4h1M173.5 159.4h1M166.8 155.5h1M165.4 158.2h1M173.9 158.6h1M171.6 157.6h1M174.1 158.2h1M167.5 159.2h1M171.9 159.6h1M170.3 156.4h1M171.6 158.3h1M171.6 158.8h1M169.1 156.1h1M168.7 158.1h1M170.1 154.6h1M173.5 157.7h1M171.6 158.3h1M173.1 158.7h1M173.2 156.4h1M171.0 156.1h1M171.1 156.4h1M171.2 157.1h1M170.4 156.7h1M168.2 157.3h1M169.0 160.4h1M167.4 158.2h1M170.9 160.2h1M168.8 158.8h1M166.5 158.5h1M172.3 158.3h1M173.9 158.7h1M169.4 159.0h1M171.5 157.7h1M170.7 155.2h1M172.7 157.2h1M170.2 155.6h1M172.9 153.9h1M175.1 159.1h1M173.9 159.5h1M166.7 158.5h1M172.2 154.1h1M171.3 157.0h1M170.5 157.8h1M172.7 157.2h1M170.3 156.9h1M171.3 161.2h1M166.6 158.6h1M168.4 156.7h1M169.7 158.5h1M167.8 159.2h1M167.7 158.1h1M172.2 159.4h1M171.6 158.2h1M168.2 155.8h1M156.6 164.0h1M174.1 157.4h1M174.9 161.4h1M172.9 119.2h1M174.2 122.9h1M170.0 122.8h1M168.1 122.7h1M171.4 122.0h1M170.9 121.8h1M173.2 119.7h1M169.7 122.3h1M173.7 120.9h1M171.3 123.6h1M166.6 117.3h1M173.0 121.9h1M172.8 118.5h1M171.4 120.8h1M170.5 121.7h1M173.2 124.6h1M166.0 119.3h1M167.5 123.0h1M169.0 121.3h1M171.8 117.5h1M173.4 122.2h1M169.6 120.3h1M169.9 121.6h1M171.4 122.0h1M168.0 119.7h1M170.9 121.2h1M169.1 122.9h1M171.7 122.1h1M172.1 123.4h1M170.0 120.8h1M172.8 121.8h1M167.5 120.3h1M172.0 121.4h1M170.0 119.6h1M170.4 122.2h1M172.8 120.6h1M168.8 120.4h1M166.7 122.4h1M173.1 120.9h1M172.1 123.2h1M170.9 121.1h1M172.9 120.1h1M171.9 119.6h1M172.8 119.9h1M171.0 121.2h1M167.6 120.3h1M171.7 120.6h1M169.2 120.0h1M169.5 120.9h1M170.2 122.7h1M171.9 120.7h1M166.5 121.1h1M172.4 120.8h1M174.9 123.4h1M173.6 120.7h1M176.0 122.1h1M166.8 123.0h1M167.5 119.1h1M173.1 123.1h1M171.3 122.4h1M173.4 118.7h1M171.5 121.9h1M168.5 122.0h1M169.9 121.5h1M170.9 123.3h1M171.4 120.7h1M167.1 120.0h1M175.3 121.6h1M173.2 122.3h1M167.6 120.3h1M170.0 122.4h1M168.6 120.2h1M167.7 117.7h1M169.8 121.3h1M166.3 118.1h1M171.7 127.1h1M171.7 82.5h1M172.8 84.6h1M168.1 86.1h1M167.4 83.9h1M172.0 84.2h1M172.6 83.3h1M170.6 83.4h1M170.9 80.6h1M168.5 81.7h1M171.7 84.1h1M168.1 82.4h1M171.8 84.5h1M172.3 83.1h1M172.4 81.4h1M169.4 81.7h1M171.6 86.9h1M169.5 83.2h1M169.4 85.9h1M172.9 83.0h1M170.7 88.1h1M167.7 84.2h1M169.5 83.2h1M169.7 84.7h1M168.1 85.3h1M170.5 85.4h1M167.9 85.9h1M170.5 86.7h1M175.2 84.9h1M173.3 83.6h1M167.3 83.7h1M172.2 83.3h1M166.4 83.3h1M170.7 82.5h1M169.2 85.1h1M172.1 85.1h1M172.3 84.5h1M166.4 81.4h1M170.0 85.8h1M168.6 87.8h1M174.5 81.4h1M173.8 82.4h1M170.8 82.9h1M170.0 86.1h1M168.9 84.7h1M173.4 84.5h1M170.3 83.7h1M173.7 84.7h1M169.9 85.8h1M168.5 83.6h1M170.4 84.8h1M167.9 86.2h1M171.0 84.2h1M172.0 81.6h1M170.0 84.2h1M172.9 85.8h1M170.3 86.8h1M171.6 83.9h1M172.9 81.0h1M168.3 82.8h1M168.6 82.9h1M167.8 84.1h1M172.6 84.0h1M174.1 84.4h1M176.9 91.3h1M222.9 195.7h1M220.5 193.6h1M220.1 192.4h1M222.9 196.1h1M222.0 195.3h1M224.6 192.9h1M222.1 194.6h1M223.8 192.5h1M219.3 195.4h1M221.0 195.2h1M223.2 195.6h1M223.7 195.2h1M222.2 192.2h1M223.8 192.6h1M221.9 196.9h1M219.3 196.0h1M220.8 194.6h1M219.3 191.5h1M222.9 198.2h1M223.6 194.9h1M222.4 197.6h1M225.0 193.9h1M220.5 197.9h1M221.6 195.9h1M224.3 193.5h1M221.2 192.5h1M224.2 194.6h1M223.6 192.6h1M223.4 193.4h1M221.8 192.7h1M221.7 195.9h1M221.7 194.3h1M223.0 194.3h1M223.0 194.9h1M223.7 194.2h1M222.4 195.1h1M224.8 195.5h1M220.3 192.9h1M222.1 194.2h1M220.7 194.0h1M223.5 192.0h1M222.7 194.4h1M224.8 192.1h1M223.0 194.5h1M222.4 195.6h1M225.6 195.5h1M223.1 192.6h1M223.3 192.7h1M222.0 195.6h1M224.6 196.4h1M222.6 196.2h1M221.8 195.0h1M222.1 196.2h1M221.8 193.3h1M220.2 198.7h1M218.7 194.7h1M221.8 194.5h1M220.5 195.7h1M222.4 193.3h1M221.6 192.8h1M222.9 198.1h1M228.3 199.0h1M222.3 195.0h1M224.1 201.6h1M222.5 194.8h1M224.9 157.4h1M224.6 157.3h1M221.1 157.4h1M224.1 154.4h1M222.3 158.8h1M225.5 156.8h1M215.8 158.1h1M221.3 157.6h1M221.7 158.5h1M226.2 156.4h1M222.1 156.2h1M220.9 156.6h1M221.5 159.4h1M220.9 157.6h1M225.1 157.6h1M223.2 157.5h1M219.5 156.5h1M221.7 157.6h1M220.0 156.9h1M223.7 156.5h1M220.4 157.4h1M219.1 158.4h1M222.1 159.0h1M220.7 159.8h1M221.4 156.0h1M221.8 160.5h1M223.5 155.9h1M221.2 153.6h1M221.7 155.7h1M221.3 158.8h1M223.7 157.5h1M228.7 156.4h1M223.7 159.8h1M222.6 158.7h1M223.2 158.9h1M221.7 159.1h1M225.7 160.1h1M221.3 161.1h1M221.9 157.9h1M223.5 156.5h1M223.2 162.3h1M222.0 158.2h1M222.0 160.4h1M223.7 157.9h1M224.1 155.9h1M219.6 156.6h1M223.9 155.9h1M219.7 155.2h1M220.4 156.2h1M222.4 158.8h1M223.8 159.0h1M222.0 160.3h1M223.4 157.1h1M219.5 159.3h1M224.4 160.4h1M221.8 157.9h1M223.8 156.3h1M219.9 155.1h1M223.6 157.0h1M226.1 158.0h1M224.0 156.8h1M222.2 160.6h1M219.8 148.2h1M223.5 161.3h1M221.6 119.1h1M219.3 118.7h1M219.8 120.7h1M223.7 120.6h1M221.2 119.5h1M222.3 120.2h1M224.4 120.8h1M224.0 121.4h1M221.9 121.1h1M220.0 121.8h1M221.5 119.6h1M222.0 122.1h1M221.9 117.2h1M220.5 120.8h1M222.9 119.5h1M222.5 121.8h1M222.9 118.1h1M220.4 119.6h1M220.6 120.5h1M224.3 120.6h1M219.3 118.7h1M223.3 119.3h1M221.4 122.9h1M225.4 123.1h1M219.3 123.4h1M221.9 122.5h1M222.1 122.6h1M222.2 121.1h1M221.8 119.7h1M222.2 122.3h1M219.7 121.2h1M219.9 119.2h1M218.6 123.7h1M222.7 120.5h1M224.6 117.9h1M222.5 120.1h1M223.8 119.0h1M222.5 121.0h1M225.5 120.3h1M222.2 121.7h1M223.3 121.9h1M222.5 119.5h1M225.1 123.8h1M222.5 120.0h1M224.7 119.6h1M222.9 118.7h1M225.5 119.3h1M223.0 120.1h1M221.1 119.2h1M222.0 119.3h1M224.4 119.6h1M222.0 122.1h1M224.0 122.4h1M224.7 121.6h1M223.9 122.4h1M219.2 121.0h1M222.4 120.8h1M223.6 119.5h1M218.9 120.1h1M223.4 119.7h1M216.9 122.9h1M228.8 123.5h1M221.3 120.3h1M216.1 117.2h1M226.4 119.5h1M222.2 83.1h1M222.8 85.6h1M222.9 84.5h1M220.9 82.8h1M222.7 82.0h1M223.9 83.3h1M221.1 85.0h1M224.1 84.4h1M220.4 85.5h1M218.6 88.0h1M223.8 82.9h1M223.0 85.8h1M223.4 84.7h1M221.9 83.2h1M223.2 83.9h1M224.7 84.0h1M219.8 83.4h1M219.9 83.3h1M222.8 84.3h1M223.4 82.3h1M222.3 83.4h1M219.1 84.0h1M221.2 84.6h1M220.4 81.8h1M222.9 83.5h1M225.6 84.5h1M221.1 83.3h1M219.6 81.2h1M221.2 84.3h1M222.5 83.9h1M223.1 83.4h1M220.8 86.3h1M223.2 83.2h1M222.7 84.1h1M219.2 83.1h1M224.7 83.0h1M217.6 83.6h1M222.6 82.3h1M221.3 82.4h1M225.6 85.0h1M215.7 81.2h1M221.4 83.2h1M222.6 82.0h1M224.6 84.9h1M224.9 82.6h1M221.9 84.1h1M218.6 79.9h1M223.3 83.1h1M224.2 85.2h1M221.7 86.0h1M218.3 84.8h1M224.3 83.3h1M222.1 81.5h1M224.8 86.1h1M221.3 86.0h1M218.5 84.0h1M226.4 81.7h1M222.8 84.1h1M227.0 85.2h1M220.8 81.9h1M220.5 84.9h1M217.1 81.6h1M223.9 82.1h1M219.7 87.6h1M221.8 82.2h1M225.4 87.6h1M226.8 86.7h1M224.5 86.5h1M217.9 84.4h1M220.3 84.4h1M222.3 80.4h1M220.8 89.5h1M216.4 78.1h1M213.2 79.2h1M272.1 194.1h1M269.4 196.0h1M271.2 196.2h1M269.8 193.2h1M274.3 193.8h1M275.5 194.8h1M271.0 195.6h1M275.6 192.3h1M277.9 195.5h1M275.4 192.4h1M272.0 194.4h1M276.1 192.9h1M271.7 192.2h1M273.1 195.3h1M269.8 194.0h1M274.9 196.9h1M275.2 194.4h1M271.0 193.6h1M272.2 195.0h1M273.6 197.0h1M274.3 193.4h1M277.2 196.1h1M273.9 193.9h1M269.4 193.5h1M275.8 193.8h1M270.7 195.1h1M274.2 195.6h1M275.2 196.7h1M271.8 196.1h1M271.4 195.7h1M274.1 195.1h1M275.9 194.8h1M276.2 196.0h1M274.0 194.1h1M272.0 194.1h1M273.2 194.8h1M280.5 195.6h1M275.4 193.7h1M272.1 194.4h1M274.1 193.5h1M277.4 194.1h1M276.1 191.8h1M273.7 195.2h1M274.1 195.6h1M274.3 195.0h1M269.4 193.9h1M268.3 195.6h1M274.4 194.6h1M271.8 194.1h1M277.9 197.1h1M273.6 196.5h1M270.1 192.3h1M272.6 193.7h1M272.4 195.1h1M280.6 193.9h1M273.8 195.2h1M273.6 196.0h1M277.7 193.2h1M274.1 194.5h1M275.5 189.8h1M264.9 187.2h1M276.3 195.4h1M274.1 187.1h1M273.7 157.1h1M272.9 158.9h1M275.5 159.0h1M274.5 158.8h1M275.8 159.6h1M277.2 158.0h1M273.9 158.2h1M275.1 157.4h1M277.8 156.6h1M274.6 157.3h1M272.7 158.0h1M277.6 156.6h1M272.0 156.7h1M271.5 160.2h1M270.6 158.1h1M274.7 158.7h1M277.0 158.6h1M272.5 157.6h1M274.9 157.0h1M272.6 158.3h1M273.1 160.6h1M273.0 158.6h1M271.7 157.9h1M274.6 157.4h1M274.4 157.8h1M276.3 156.5h1M274.3 159.5h1M273.3 158.9h1M274.3 159.2h1M281.6 157.5h1M274.6 157.5h1M272.5 160.9h1M277.1 158.7h1M272.0 161.8h1M277.7 158.1h1M273.0 158.5h1M277.9 157.9h1M272.3 157.7h1M269.1 159.1h1M274.3 159.7h1M274.6 158.5h1M274.1 155.5h1M274.0 158.4h1M276.3 158.9h1M271.9 157.9h1M274.5 159.8h1M272.6 155.2h1M272.4 157.3h1M277.0 158.8h1M270.7 159.1h1M277.5 158.8h1M271.5 160.3h1M275.4 156.5h1M278.6 158.1h1M269.2 158.3h1M273.5 158.8h1M274.7 156.6h1M274.8 159.1h1M273.5 157.8h1M271.3 157.6h1M272.6 157.8h1M272.8 155.2h1M275.0 156.9h1M273.2 156.4h1M273.7 157.3h1M277.6 155.2h1M271.0 157.9h1M271.0 157.5h1M279.5 158.3h1M274.2 160.1h1M276.7 159.5h1M274.2 157.0h1M280.0 161.1h1M270.8 120.7h1M276.7 122.6h1M273.6 120.6h1M275.2 122.0h1M272.2 121.0h1M275.1 121.9h1M275.3 122.3h1M274.4 120.4h1M270.9 120.0h1M275.5 123.1h1M275.4 120.5h1M270.6 122.2h1M271.8 120.8h1M276.7 120.1h1M273.0 121.8h1M272.7 122.2h1M277.0 120.7h1M276.6 119.7h1M274.0 120.6h1M269.0 120.6h1M275.0 120.6h1M271.4 121.8h1M272.2 122.2h1M275.5 121.6h1M273.3 121.0h1M276.8 123.6h1M274.4 117.9h1M271.4 119.2h1M276.6 119.2h1M276.3 121.4h1M273.4 122.9h1M273.3 122.6h1M276.0 120.1h1M273.7 122.6h1M269.5 122.3h1M273.3 122.1h1M273.1 120.4h1M269.8 119.1h1M272.2 120.9h1M271.4 121.3h1M274.3 121.5h1M274.7 121.8h1M272.4 121.6h1M273.7 121.5h1M270.3 120.2h1M271.8 119.9h1M273.0 120.3h1M273.2 119.6h1M271.2 120.4h1M272.1 121.2h1M273.8 121.9h1M271.9 120.9h1M273.4 120.9h1M271.5 123.1h1M273.9 122.6h1M272.2 121.0h1M275.2 120.9h1M273.8 120.2h1M277.1 122.0h1M273.1 121.1h1M272.2 121.9h1M273.6 120.3h1M274.4 124.2h1M273.6 120.2h1M272.8 122.0h1M272.5 119.3h1M275.7 119.0h1M270.7 120.7h1M273.6 118.8h1M266.6 121.9h1M271.4 113.9h1M279.4 125.7h1M280.6 121.1h1M270.4 85.4h1M275.8 82.4h1M272.0 85.2h1M270.3 84.7h1M273.1 85.5h1M271.7 83.4h1M272.0 86.5h1M275.2 82.5h1M272.4 84.3h1M273.3 84.8h1M271.1 83.0h1M277.8 85.9h1M271.8 86.7h1M276.6 80.6h1M274.3 85.6h1M274.0 83.9h1M276.4 84.6h1M268.8 84.0h1M274.1 82.0h1M276.3 84.0h1M270.4 83.7h1M272.1 84.9h1M272.0 83.2h1M276.8 83.2h1M272.7 83.9h1M272.1 85.1h1M271.1 83.2h1M277.8 81.2h1M271.4 84.1h1M268.6 80.2h1M272.2 85.6h1M274.2 83.1h1M271.2 88.0h1M274.9 82.3h1M277.2 86.2h1M272.2 81.2h1M278.2 83.8h1M272.6 84.4h1M273.0 85.8h1M272.3 84.0h1M274.9 86.0h1M272.1 83.1h1M276.8 83.9h1M275.8 84.4h1M274.1 82.7h1M273.6 83.9h1M272.3 86.9h1M270.9 82.8h1M274.5 85.8h1M272.1 83.6h1M272.1 82.4h1M276.5 83.9h1M272.8 84.4h1M275.7 86.2h1M274.5 84.4h1M275.0 85.7h1M275.0 82.0h1M274.0 83.4h1M277.4 84.2h1M270.3 89.7h1M271.9 85.9h1M273.5 85.8h1M278.9 81.0h1" stroke="#2222ff" stroke-width="1.15" fill="none"/>
<text x="182.5" y="15" text-anchor="middle" font-family="Liberation Sans,sans-serif" font-size="10" font-weight="bold" fill="#222">Scope Plot</text>
<text x="33.8" y="267.5" text-anchor="middle" font-family="Liberation Sans,sans-serif" font-size="7.4" fill="#4c4c4c">-2</text>
<text x="31.2" y="259.3" text-anchor="end" font-family="Liberation Sans,sans-serif" font-size="7.4" fill="#4c4c4c">-2</text>
<text x="74.4" y="267.5" text-anchor="middle" font-family="Liberation Sans,sans-serif" font-size="7.4" fill="#4c4c4c">-1.5</text>
<text x="31.2" y="230.1" text-anchor="end" font-family="Liberation Sans,sans-serif" font-size="7.4" fill="#4c4c4c">-1.5</text>
<text x="115.0" y="267.5" text-anchor="middle" font-family="Liberation Sans,sans-serif" font-size="7.4" fill="#4c4c4c">-1</text>
<text x="31.2" y="200.9" text-anchor="end" font-family="Liberation Sans,sans-serif" font-size="7.4" fill="#4c4c4c">-1</text>
<text x="155.7" y="267.5" text-anchor="middle" font-family="Liberation Sans,sans-serif" font-size="7.4" fill="#4c4c4c">-0.5</text>
<text x="31.2" y="171.8" text-anchor="end" font-family="Liberation Sans,sans-serif" font-size="7.4" fill="#4c4c4c">-0.5</text>
<text x="196.3" y="267.5" text-anchor="middle" font-family="Liberation Sans,sans-serif" font-size="7.4" fill="#4c4c4c">0</text>
<text x="31.2" y="142.6" text-anchor="end" font-family="Liberation Sans,sans-serif" font-size="7.4" fill="#4c4c4c">0</text>
<text x="236.9" y="267.5" text-anchor="middle" font-family="Liberation Sans,sans-serif" font-size="7.4" fill="#4c4c4c">0.5</text>
<text x="31.2" y="113.4" text-anchor="end" font-family="Liberation Sans,sans-serif" font-size="7.4" fill="#4c4c4c">0.5</text>
<text x="277.6" y="267.5" text-anchor="middle" font-family="Liberation Sans,sans-serif" font-size="7.4" fill="#4c4c4c">1</text>
<text x="31.2" y="84.3" text-anchor="end" font-family="Liberation Sans,sans-serif" font-size="7.4" fill="#4c4c4c">1</text>
<text x="318.2" y="267.5" text-anchor="middle" font-family="Liberation Sans,sans-serif" font-size="7.4" fill="#4c4c4c">1.5</text>
<text x="31.2" y="55.1" text-anchor="end" font-family="Liberation Sans,sans-serif" font-size="7.4" fill="#4c4c4c">1.5</text>
<text x="358.8" y="267.5" text-anchor="middle" font-family="Liberation Sans,sans-serif" font-size="7.4" fill="#4c4c4c">2</text>
<text x="31.2" y="25.9" text-anchor="end" font-family="Liberation Sans,sans-serif" font-size="7.4" fill="#4c4c4c">2</text>
<text x="196.2" y="279.9" text-anchor="middle" font-family="Liberation Sans,sans-serif" font-size="6.6" font-weight="bold" fill="#222">Ch1</text>
<text transform="translate(11.3 139.4) rotate(-90)" text-anchor="middle" font-family="Liberation Sans,sans-serif" font-size="6.6" font-weight="bold" fill="#222">Ch2</text>
<rect x="348.0" y="5.0" width="11" height="12.4" fill="#4a4aff"/>
<text x="353.5" y="13.6" text-anchor="middle" font-family="Liberation Sans,sans-serif" font-size="6" fill="#0c0c48">XY</text>
</svg>
 <!--/PLOT-->
 <div class="a" style="left:0;top:151px;width:472px;height:1.2px;background:#9b9b9b"></div>
 <div class="a" style="left:366.4px;top:152px;width:1px;height:286px;background:#b5b5b5"></div>
 <!-- right panel -->
 <div class="a" style="left:370px;top:158.3px;width:6.5px;height:6.5px;border:1px solid #b0b0b0;background:#f6f6f6;border-radius:1px"></div>
 <div class="btn" style="left:380px;top:154.8px;width:47.8px;height:14.2px;line-height:12.5px;font-size:8.6px">Persistence</div>

 <div class="a" style="left:367.5px;top:183.5px;width:101.5px;height:98.7px;border:1px solid #d2d2d2;border-radius:2px"></div>
 <div class="lbl" style="left:369px;top:179.2px;font-weight:bold;background:#ededed;padding:0 1px;font-size:8.3px;letter-spacing:-0.12px">Axes Options</div>
 <div class="lbl" style="left:367.9px;top:195.8px">X/Div:</div>
 <div class="lbl" style="left:367.9px;top:215.1px">Y/Div:</div>
 <div class="lbl" style="left:367.9px;top:234.4px">X Off:</div>
 <div class="lbl" style="left:367.9px;top:253.7px">Y Off:</div>
 <div class="btn pm" style="left:441.4px;top:190.2px;width:11.6px;height:17.9px;line-height:16.5px">+</div><div class="btn pm" style="left:454.6px;top:190.2px;width:13.2px;height:17.9px;line-height:16.5px">-</div>
 <div class="btn pm" style="left:441.4px;top:209.6px;width:11.6px;height:17.9px;line-height:16.5px">+</div><div class="btn pm" style="left:454.6px;top:209.6px;width:13.2px;height:17.9px;line-height:16.5px">-</div>
 <div class="btn pm" style="left:441.4px;top:229.0px;width:11.6px;height:17.9px;line-height:16.5px">+</div><div class="btn pm" style="left:454.6px;top:229.0px;width:13.2px;height:17.9px;line-height:16.5px">-</div>
 <div class="btn pm" style="left:441.4px;top:248.4px;width:11.6px;height:17.9px;line-height:16.5px">+</div><div class="btn pm" style="left:454.6px;top:248.4px;width:13.2px;height:17.9px;line-height:16.5px">-</div>
 <div class="a" style="left:370.3px;top:271.6px;width:6.5px;height:6.5px;border:1px solid #b0b0b0;background:#f6f6f6;border-radius:1px"></div>
 <svg class="a" style="left:370.2px;top:269.3px" width="10" height="9" viewBox="0 0 10 9"><path d="M1.6 4.6L3.6 6.8L8 1.4" stroke="#111" stroke-width="1.6" fill="none"/></svg>
 <div class="lbl" style="left:382.6px;top:270.8px;letter-spacing:-0.14px">Autorange</div>

 <div class="a" style="left:367.5px;top:297.3px;width:101.5px;height:109.3px;border:1px solid #d2d2d2;border-radius:2px"></div>
 <div class="lbl" style="left:369px;top:293px;font-weight:bold;background:#ededed;padding:0 1px;font-size:8.3px;letter-spacing:-0.15px">Channel Options</div>
 <svg class="a" style="left:370.8px;top:309.2px" width="5" height="7" viewBox="0 0 5 7"><path d="M3.8 .8L1.2 3.500L3.800 6.200" stroke="#555" stroke-width=".9" fill="none"/></svg>
 <svg class="a" style="left:461.800px;top:309.200px" width="5" height="7" viewBox="0 0 5 7"><path d="M1.200 .8L3.800 3.500L1.200 6.200" stroke="#555" stroke-width=".9" fill="none"/></svg>
 <div class="a" style="left:377.9px;top:306.2px;width:29.9px;height:18px;border:1px solid #bdbdbd;border-bottom:none;border-radius:2px 2px 0 0;background:linear-gradient(#eee,#d9d9d9);text-align:center;line-height:17px;font-size:8.7px;color:#444;padding-left:2.5px">Ch2</div>
 <div class="a" style="left:407.8px;top:306.2px;width:27px;height:18px;border:1px solid #bdbdbd;border-left:none;border-bottom:none;border-radius:0 2px 0 0;background:linear-gradient(#eee,#d9d9d9);text-align:center;line-height:17px;font-size:8.7px;color:#444;padding-left:3px">Trig</div>
 <div class="a" style="left:367.5px;top:323.9px;width:101.5px;height:82.5px;border:1px solid #bdbdbd;background:#efefef"></div>
 <div class="a" style="left:434.6px;top:303px;width:25.2px;height:22px;border:1px solid #bdbdbd;border-top:1.6px solid #5b96e0;border-bottom:none;border-radius:2.5px 2.5px 0 0;background:#fff;text-align:center;line-height:20.5px;font-size:8.7px;color:#333;padding-left:2.5px">XY</div>
 <div class="lbl" style="left:370.8px;top:336.6px;letter-spacing:-0.17px">Channel</div>
 <div class="btn" style="left:413.2px;top:331px;width:53px;height:18.3px;text-align:left;padding-left:2.2px;padding-top:1px;line-height:15.8px;font-size:8.6px;color:#333">Ch 1</div>
 <svg class="a" style="left:454px;top:337.4px" width="7" height="5" viewBox="0 0 7 5"><path d="M1 1L3.5 3.6L6 1" stroke="#6a6a6a" stroke-width="1" fill="none"/></svg>
 <div class="lbl" style="left:370.8px;top:361.4px;letter-spacing:-0.17px">Channel</div>
 <div class="btn" style="left:413.2px;top:355.6px;width:53px;height:18.7px;text-align:left;padding-left:2.2px;padding-top:1px;line-height:16.2px;font-size:8.6px;color:#333">Ch 2</div>
 <svg class="a" style="left:454px;top:362.2px" width="7" height="5" viewBox="0 0 7 5"><path d="M1 1L3.5 3.6L6 1" stroke="#6a6a6a" stroke-width="1" fill="none"/></svg>
 <div class="lbl" style="left:370.8px;top:385.9px;letter-spacing:-0.2px">Marker:</div>
 <div class="btn" style="left:413.2px;top:379.9px;width:53px;height:19px;text-align:left;padding-left:2.2px;padding-top:1px;line-height:16.6px;font-size:8.6px;color:#333">Dot Med</div>
 <svg class="a" style="left:454px;top:386.7px" width="7" height="5" viewBox="0 0 7 5"><path d="M1 1L3.5 3.6L6 1" stroke="#6a6a6a" stroke-width="1" fill="none"/></svg>
 <div class="btn" style="left:367.8px;top:415.6px;width:100.8px;height:18.2px;line-height:17px;font-size:8.8px;color:#555">Stop</div>
 <div class="a" style="left:0;top:437.3px;width:472px;height:12px;background:#ededed;border-top:1px solid #a8a8a8"></div>
 <div class="a" style="left:0;top:438.3px;width:472px;height:7.9px;overflow:hidden">
  <div class="lbl" style="left:5px;top:5.1px;font-weight:bold;font-size:8.3px">Frame Error Rate</div>
  <div class="lbl" style="left:399px;top:5.1px;font-weight:bold;font-size:8.3px">Options</div>
 </div>
</div>

<div class="a" id="vbbar">
 <svg class="a" style="left:680px;top:0" width="170" height="12.400" viewBox="680 491.200 170 12.400">
  <rect x="688.400" y="493.200" width="7.800" height="9" rx="1" fill="#3b7ad6"/><path d="M690 494.600L694.600 500.800M694.600 494.600L690 500.800M692.300 494V501.600" stroke="#dfeafa" stroke-width=".8"/>
  <circle cx="704.400" cy="497.700" r="4.500" fill="#dcdcdc" stroke="#b4b4b4" stroke-width=".6"/><circle cx="704.400" cy="497.700" r="1.300" fill="#f4f4f4" stroke="#b8b8b8" stroke-width=".5"/>
  <rect x="715.600" y="493.400" width="5.600" height="4.400" fill="#3f80dc" stroke="#1d4fa0" stroke-width=".6"/><rect x="712.200" y="497" width="5.600" height="4.400" fill="#3f80dc" stroke="#1d4fa0" stroke-width=".6"/><path d="M713.600 502.200H716.400M717 498.600H719.800" stroke="#1d4fa0" stroke-width=".7"/>
  <path d="M732.600 493.200L735 495.400L728.600 501.400L725.400 502.600L726.400 499.400Z" fill="#4a8ae2" stroke="#1f56b0" stroke-width=".6"/>
  <path d="M737.600 495.400H740.600L741.400 494.400H745.800V501.800H737.600Z" fill="#d4d4d4" stroke="#a6a6a6" stroke-width=".6"/>
  <rect x="749.600" y="493.200" width="8.800" height="7" rx=".8" fill="#f6f8fb" stroke="#2f62b8" stroke-width=".7"/><rect x="749.600" y="493.200" width="8.800" height="3.400" fill="#3b7ad6"/><path d="M751.400 502.200H756.600" stroke="#445" stroke-width="1"/>
  <rect x="765.400" y="493.200" width="5.800" height="5.400" fill="#4a8ae2" stroke="#1d4fa0" stroke-width=".6"/><rect x="762.600" y="496" width="5.800" height="5.400" fill="#6aa2ec" stroke="#1d4fa0" stroke-width=".6"/>
  <rect x="774.600" y="493.200" width="8" height="9" rx="1" fill="#3b7ad6"/><path d="M776.600 495.200V500.400H780.600V495.200" stroke="#eef4fc" stroke-width="1.100" fill="none"/>
  <circle cx="791.400" cy="497.800" r="4.500" fill="#3f86dc"/><path d="M788.600 495.400Q791 493.600 793 495.600Q791.400 497.600 792.600 499.400Q790.400 501.600 788.600 499.800Q789.800 497.600 788.600 495.400Z" fill="#57b848"/><path d="M793.400 499.600L795.800 498.800L795 501.400Z" fill="#e8f0d0"/>
  <rect x="799.800" y="493.400" width="8" height="8.600" rx=".8" fill="#f6f6f6" stroke="#1e2a44" stroke-width=".9"/><path d="M803.800 495V499.400M801.800 497.600L803.800 499.800L805.800 497.600" stroke="#1e2a44" stroke-width="1.100" fill="none"/>
  <path d="M842.500 503.300L849.700 496.100M845 503.300L849.700 498.600M847.500 503.300L849.700 501.100" stroke="#a0a0a0" stroke-width=".6"/>
 </svg>
 <div class="t" style="left:812px;top:3.2px;font-size:8.2px;color:#333">Left &#8984;</div>
</div>
</body></html>
